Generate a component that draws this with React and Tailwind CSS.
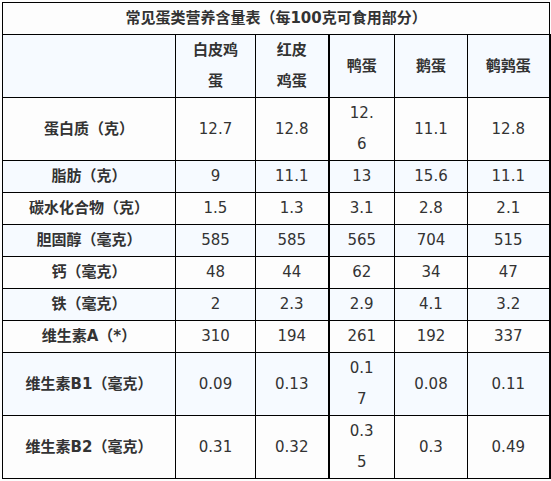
const cols = ['白皮鸡<br>蛋', '红皮<br>鸡蛋', '鸭蛋', '鹅蛋', '鹌鹑蛋'];

const rows = [
  { name: '蛋白质（克）', vals: ['12.7', '12.8', '12.<br>6', '11.1', '12.8'] },
  { name: '脂肪（克）', vals: ['9', '11.1', '13', '15.6', '11.1'], blue: true },
  { name: '碳水化合物（克）', vals: ['1.5', '1.3', '3.1', '2.8', '2.1'] },
  { name: '胆固醇（毫克）', vals: ['585', '585', '565', '704', '515'], blue: true },
  { name: '钙（毫克）', vals: ['48', '44', '62', '34', '47'] },
  { name: '铁（毫克）', vals: ['2', '2.3', '2.9', '4.1', '3.2'], blue: true },
  { name: '维生素A（*）', vals: ['310', '194', '261', '192', '337'] },
  { name: '维生素B1（毫克）', vals: ['0.09', '0.13', '0.1<br>7', '0.08', '0.11'], blue: true },
  { name: '维生素B2（毫克）', vals: ['0.31', '0.32', '0.3<br>5', '0.3', '0.49'] },
];

// split "a<br>b" into lines
function Lines({ text }) {
  const parts = text.split('<br>');
  return parts.map((p, i) => (
    <span key={i}>
      {p}
      {i < parts.length - 1 && <br />}
    </span>
  ));
}

// thick divider after the 2nd and 5th column
const thick = [false, true, false, false, true];

export default function App() {
  return (
    <div className="w-[551px] h-[481px] bg-[#fdfdfd] pt-[2px] pl-[2px] text-[#333] text-[15px] leading-[31px]" style={{ fontFamily: '"DejaVu Sans", "Noto Sans CJK SC", sans-serif' }}>
      <table className="table-fixed border-collapse w-[547px]">
        <colgroup>
          <col className="w-[173px]" />
          <col className="w-[80px]" />
          <col className="w-[73px]" />
          <col className="w-[66px]" />
          <col className="w-[73px]" />
          <col className="w-[82px]" />
        </colgroup>
        <thead>
          <tr>
            <th colSpan={6} className="border border-black bg-[#fdfdfd] p-0 text-center font-bold">
              常见蛋类营养含量表（每100克可食用部分）
            </th>
          </tr>
          <tr className="bg-[#f6faff]">
            <th className="border border-black p-0"></th>
            {cols.map((c, i) => (
              <th key={i} className={`border border-black p-0 text-center font-bold ${thick[i] ? 'border-r-2' : ''}`}>
                <Lines text={c} />
              </th>
            ))}
          </tr>
        </thead>
        <tbody>
          {rows.map(r => (
            <tr key={r.name} className={r.blue ? 'bg-[#f6faff]' : 'bg-[#fdfdfd]'}>
              <td className="border border-black p-0 text-center font-bold">{r.name}</td>
              {r.vals.map((v, i) => (
                <td key={i} className={`border border-black p-0 text-center ${thick[i] ? 'border-r-2' : ''}`}>
                  <Lines text={v} />
                </td>
              ))}
            </tr>
          ))}
        </tbody>
      </table>
    </div>
  );
}
